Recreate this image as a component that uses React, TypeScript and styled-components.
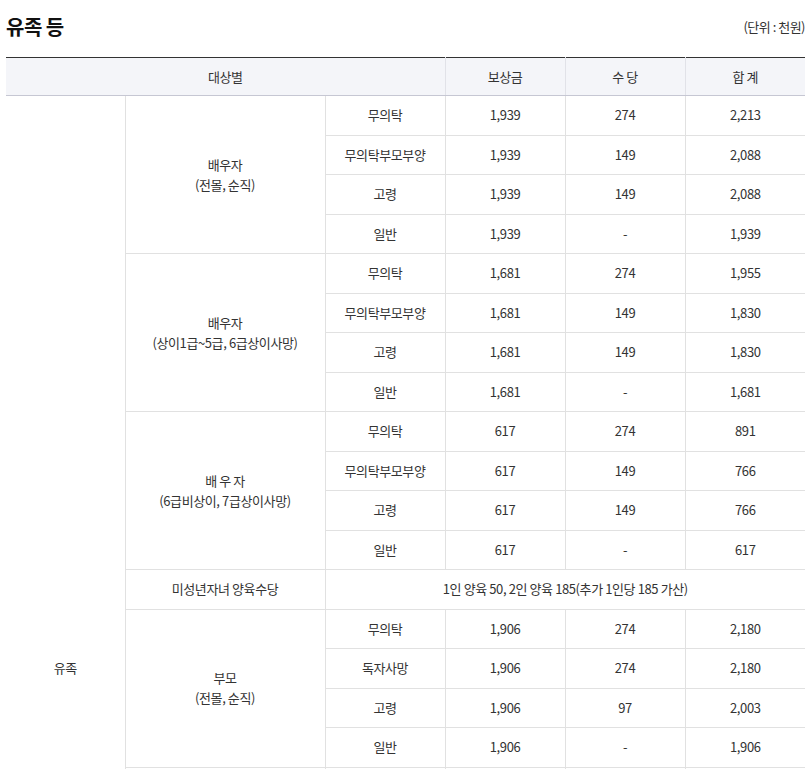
import { createGlobalStyle, styled } from "styled-components";

const GlobalStyle = createGlobalStyle`
  body {
    margin: 0;
    background: #fff;
    font-family: "Noto Sans CJK KR", "Noto Sans", sans-serif;
    color: #333;
  }
`;

const Section = styled.section`
  padding: 0 6px;
`;

const TitleBar = styled.div`
  display: flex;
  justify-content: space-between;
  align-items: flex-end;
  height: 57px;
  padding-bottom: 16px;
  box-sizing: border-box;
`;

const Title = styled.h3`
  margin: 0;
  font-size: 20px;
  font-weight: 700;
  color: #111;
  letter-spacing: -0.5px;
  line-height: 28px;
`;

const Unit = styled.span`
  font-size: 13px;
  color: #333;
  letter-spacing: -0.5px;
  line-height: 16px;
  margin-bottom: 6px;
`;

const Table = styled.table`
  width: 100%;
  border-collapse: collapse;
  table-layout: fixed;
  border-top: 1px solid #333;
  font-size: 13px;
  letter-spacing: -0.4px;
`;

const Th = styled.th<{ $first?: boolean }>`
  height: 37px;
  padding: 0;
  background: #f4f5f9;
  font-weight: 400;
  color: #333;
  border-bottom: 1px solid #c6c7d3;
  border-left: ${(p) => (p.$first ? "none" : "1px solid #e1e2e8")};
  text-align: center;
`;

const Tr = styled.tr`
  height: 39.5px;
`;

const Td = styled.td<{ $first?: boolean }>`
  text-align: center;
  vertical-align: middle;
  border-bottom: 1px solid #e1e1e1;
  border-left: ${(p) => (p.$first ? "none" : "1px solid #e1e1e1")};
  line-height: 20px;
  padding: 0 4px;
`;

type Row = [string, string, string, string];
type Group = { label: string[]; rows: Row[] };

const before: Group[] = [
  {
    label: ["배우자", "(전몰, 순직)"],
    rows: [
      ["무의탁", "1,939", "274", "2,213"],
      ["무의탁부모부양", "1,939", "149", "2,088"],
      ["고령", "1,939", "149", "2,088"],
      ["일반", "1,939", "-", "1,939"],
    ],
  },
  {
    label: ["배우자", "(상이1급~5급, 6급상이사망)"],
    rows: [
      ["무의탁", "1,681", "274", "1,955"],
      ["무의탁부모부양", "1,681", "149", "1,830"],
      ["고령", "1,681", "149", "1,830"],
      ["일반", "1,681", "-", "1,681"],
    ],
  },
  {
    label: ["배 우 자", "(6급비상이, 7급상이사망)"],
    rows: [
      ["무의탁", "617", "274", "891"],
      ["무의탁부모부양", "617", "149", "766"],
      ["고령", "617", "149", "766"],
      ["일반", "617", "-", "617"],
    ],
  },
];

const after: Group[] = [
  {
    label: ["부모", "(전몰, 순직)"],
    rows: [
      ["무의탁", "1,906", "274", "2,180"],
      ["독자사망", "1,906", "274", "2,180"],
      ["고령", "1,906", "97", "2,003"],
      ["일반", "1,906", "-", "1,906"],
    ],
  },
  {
    label: ["부모", "(상이1급~5급, 6급상이사망)"],
    rows: [
      ["무의탁", "1,681", "274", "1,955"],
      ["독자사망", "1,681", "274", "1,955"],
      ["고령", "1,681", "97", "1,778"],
      ["일반", "1,681", "-", "1,681"],
    ],
  },
  {
    label: ["부모", "(6급비상이, 7급상이사망)"],
    rows: [
      ["무의탁", "617", "274", "891"],
      ["독자사망", "617", "274", "891"],
      ["고령", "617", "97", "714"],
      ["일반", "617", "-", "617"],
    ],
  },
  {
    label: ["자녀", "(전몰, 순직)"],
    rows: [
      ["무의탁", "1,906", "274", "2,180"],
      ["고령", "1,906", "97", "2,003"],
      ["일반", "1,906", "-", "1,906"],
      ["미성년", "1,906", "-", "1,906"],
    ],
  },
];

const totalRows =
  [...before, ...after].reduce((n, g) => n + g.rows.length, 0) + 1;

function GroupRows({ group, lead }: { group: Group; lead?: boolean }) {
  return (
    <>
      {group.rows.map((r, i) => (
        <Tr key={i}>
          {lead && i === 0 && (
            <Td $first rowSpan={totalRows}>
              유족
            </Td>
          )}
          {i === 0 && (
            <Td rowSpan={group.rows.length}>
              {group.label[0]}
              <br />
              {group.label[1]}
            </Td>
          )}
          {r.map((c, j) => (
            <Td key={j}>{c}</Td>
          ))}
        </Tr>
      ))}
    </>
  );
}

export default function App() {
  return (
    <>
      <GlobalStyle />
      <Section>
        <TitleBar>
          <Title>유족 등</Title>
          <Unit>(단위 : 천원)</Unit>
        </TitleBar>
        <Table>
          <colgroup>
            <col style={{ width: 119 }} />
            <col style={{ width: 200 }} />
            <col style={{ width: 120 }} />
            <col style={{ width: 120 }} />
            <col style={{ width: 120 }} />
            <col style={{ width: 120 }} />
          </colgroup>
          <thead>
            <tr>
              <Th $first colSpan={3}>
                대상별
              </Th>
              <Th>보상금</Th>
              <Th>수 당</Th>
              <Th>합 계</Th>
            </tr>
          </thead>
          <tbody>
            {before.map((g, i) => (
              <GroupRows key={i} group={g} lead={i === 0} />
            ))}
            <Tr>
              <Td>미성년자녀 양육수당</Td>
              <Td colSpan={4}>1인 양육 50, 2인 양육 185(추가 1인당 185 가산)</Td>
            </Tr>
            {after.map((g, i) => (
              <GroupRows key={i} group={g} />
            ))}
          </tbody>
        </Table>
      </Section>
    </>
  );
}
